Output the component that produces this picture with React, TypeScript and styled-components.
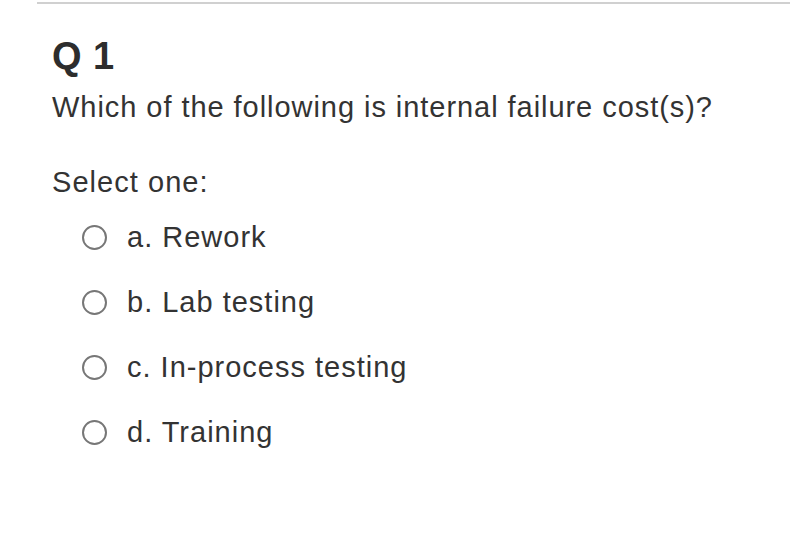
import React from "react";
import styled, { createGlobalStyle } from "styled-components";

const Global = createGlobalStyle`
  html, body { margin: 0; padding: 0; background: #fff; }
  body { font-family: "Liberation Sans", Arial, sans-serif; color: #333; }
`;

const Page = styled.div`
  width: 790px;
  height: 536px;
  box-sizing: border-box;
  padding-left: 37px;
  padding-top: 2px;
`;

const Rule = styled.hr`
  margin: 0;
  border: 0;
  border-top: 2px solid #d0d0d0;
`;

const Body = styled.div`
  padding-left: 15px;
`;

const Title = styled.h1`
  margin: 30px 0 0;
  font-size: 38px;
  font-weight: 700;
  line-height: 44px;
  letter-spacing: 0.5px;
  color: #2d2d2d;
`;

const Question = styled.p`
  margin: 10px 0 0;
  font-size: 29px;
  line-height: 38px;
  letter-spacing: 0.95px;
  color: #333;
`;

const Prompt = styled.p`
  margin: 38px 0 0;
  font-size: 29px;
  line-height: 36px;
  letter-spacing: 1.05px;
  color: #333;
`;

const Options = styled.div`
  display: flex;
  flex-direction: column;
  gap: 27px;
  margin-top: 18px;
  padding-left: 30px;
`;

const Option = styled.label`
  display: flex;
  align-items: center;
  gap: 20px;
  font-size: 29px;
  line-height: 38px;
  letter-spacing: 1px;
  color: #333;
`;

const Radio = styled.span`
  width: 21px;
  height: 21px;
  border: 2px solid #777;
  border-radius: 50%;
  flex: none;
`;

const options = ["a. Rework", "b. Lab testing", "c. In-process testing", "d. Training"];

export default function App() {
  return (
    <>
      <Global />
      <Page>
        <Rule />
        <Body>
          <Title>Q 1</Title>
          <Question>Which of the following is internal failure cost(s)?</Question>
          <Prompt>Select one:</Prompt>
          <Options>
            {options.map((o) => (
              <Option key={o}>
                <Radio />
                {o}
              </Option>
            ))}
          </Options>
        </Body>
      </Page>
    </>
  );
}
